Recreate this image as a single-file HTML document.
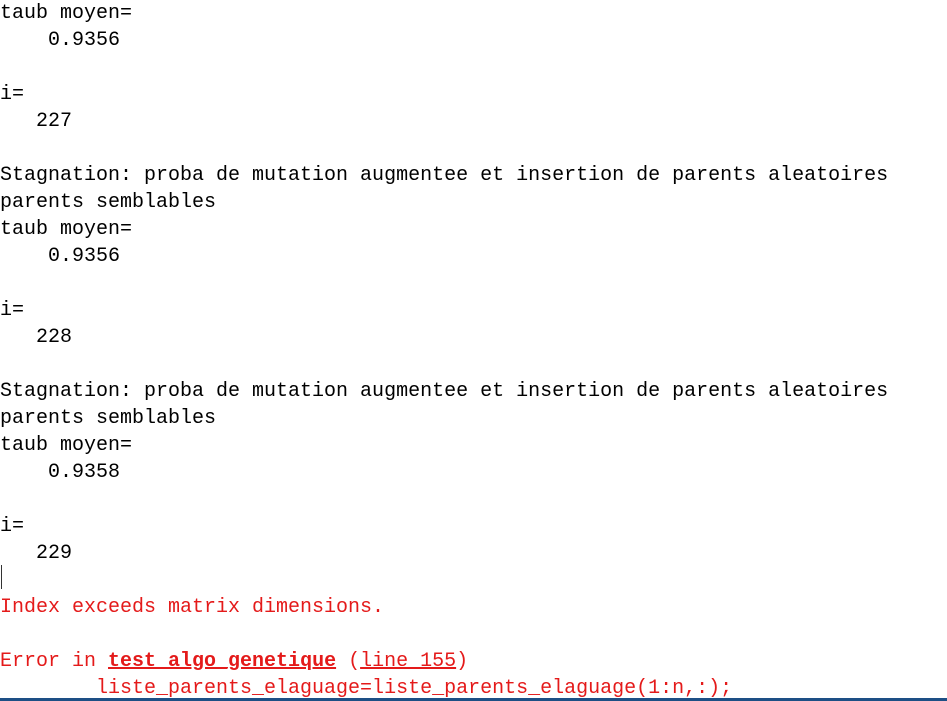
<!DOCTYPE html>
<html><head><meta charset="utf-8"><style>
html,body{margin:0;padding:0;background:#fff;width:947px;height:701px;overflow:hidden;position:relative}
pre{margin:0;position:absolute;left:0;top:0;font-family:"Liberation Mono",monospace;font-size:20px;line-height:27px;color:#000;white-space:pre}
.r{color:#e41a1a}
.b{font-weight:bold;text-decoration:underline}
.u{text-decoration:underline}
.cur{position:absolute;left:1px;top:565px;width:1px;height:24px;background:#333}
.bar{position:absolute;left:0;top:698px;width:947px;height:3px;background:#1d4f85}
</style></head><body>
<pre>taub moyen=
    0.9356

i=
   227

Stagnation: proba de mutation augmentee et insertion de parents aleatoires
parents semblables
taub moyen=
    0.9356

i=
   228

Stagnation: proba de mutation augmentee et insertion de parents aleatoires
parents semblables
taub moyen=
    0.9358

i=
   229

<span class="r">Index exceeds matrix dimensions.</span>

<span class="r">Error in <span class="b">test_algo_genetique</span> (<span class="u">line 155</span>)</span>
<span class="r">        liste_parents_elaguage=liste_parents_elaguage(1:n,:);</span></pre>
<div class="cur"></div>
<div class="bar"></div>
</body></html>
